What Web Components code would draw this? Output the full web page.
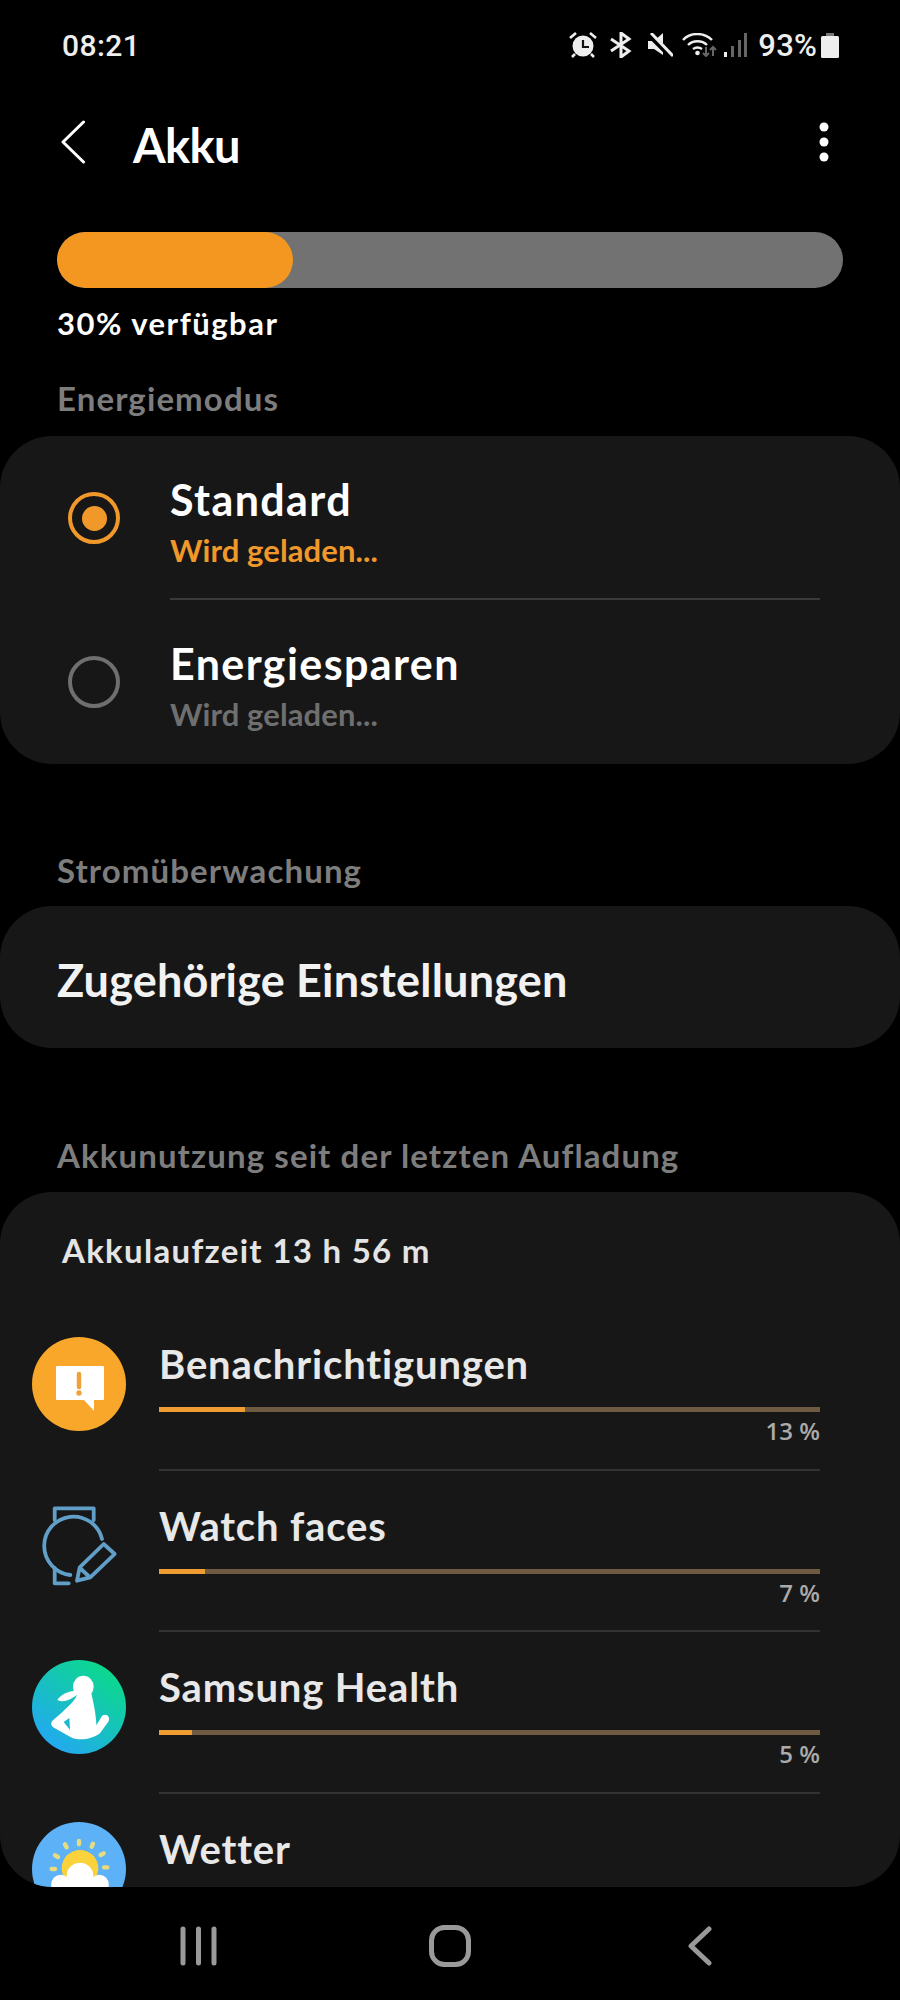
<!DOCTYPE html>
<html lang="de">
<head>
<meta charset="utf-8">
<title>Akku</title>
<style>
  html, body { margin: 0; background: #000; }
  body { width: 900px; height: 2000px; overflow: hidden; font-family: "Lato", "Noto Sans", sans-serif; color: #fff; }
  .related { height: 142px; display: flex; align-items: center; padding: 5px 0 0 57px; box-sizing: border-box; font-size: 45px; font-weight: 700; letter-spacing: .2px; color: #f2f2f2; }
</style>
</head>
<body>
<status-bar></status-bar>
<app-header heading="Akku"></app-header>
<charge-meter level="30"></charge-meter>

<section-label style="--top:37px">Energiemodus</section-label>
<group-card style="--mt:19px">
  <mode-row checked heading="Standard" sub="Wird geladen..."></mode-row>
  <mode-row heading="Energiesparen" sub="Wird geladen..."></mode-row>
</group-card>

<section-label style="--top:87px">Stromüberwachung</section-label>
<group-card style="--mt:17px">
  <div class="related">Zugehörige Einstellungen</div>
</group-card>

<section-label style="--top:88px">Akkunutzung seit der letzten Aufladung</section-label>
<group-card style="--mt:18px;--h:695px">
  <usage-head>Akkulaufzeit 13 h 56 m</usage-head>
  <usage-row name="Benachrichtigungen" pct="13" icon="notify"></usage-row>
  <usage-row name="Watch faces" pct="7" icon="watch"></usage-row>
  <usage-row name="Samsung Health" pct="5" icon="health"></usage-row>
  <usage-row name="Wetter" icon="weather"></usage-row>
</group-card>

<nav-bar></nav-bar>

<script>
class StatusBar extends HTMLElement {
    constructor() {
        super();
        this.attachShadow({ mode: 'open' });
    }

    connectedCallback() {
        this.shadowRoot.innerHTML = `
            <style>
                :host { display: flex; align-items: center; height: 90px; padding: 0 61px 0 62px; font-family: Roboto, "Liberation Sans", sans-serif; color: #eee; }
                .time { font-size: 30px; font-weight: 500; letter-spacing: .4px; margin-right: auto; }
                .pct { font-size: 31px; font-weight: 500; letter-spacing: .2px; margin-left: 11px; }
                svg { display: block; flex: none; }
            </style>
            <span class="time">08:21</span>
            <svg width="28" height="26" viewBox="0 0 28 26" fill="none">
                <circle cx="14" cy="14" r="10.500" fill="#eee"/>
                <path d="M14 8v7h6" stroke="#111" stroke-width="2.200"/>
                <path d="M1 6l6-5M27 6l-6-5M6 22l-3 3M22 22l3 3" stroke="#eee" stroke-width="2.600"/>
            </svg>
            <svg width="25" height="26" viewBox="0 0 25 26" fill="none" stroke="#eee" stroke-width="3" style="margin-left:12px">
                <path d="M2 7l18 12-8 6V1l8 6L2 19"/>
            </svg>
            <svg width="25" height="25" viewBox="0 0 25 25" style="margin-left:14px">
                <path d="M0 8h6l9-8v22l-9-6H0z" fill="#eee"/>
                <path d="M1 1l23 23" stroke="#000" stroke-width="6"/>
                <path d="M3 0l22 23" stroke="#eee" stroke-width="3"/>
            </svg>
            <svg width="35" height="24" viewBox="0 0 35 24" fill="none" style="margin-left:9px">
                <path d="M1 7c7-8 21-8 29 0M6 12c5-5 14-5 19 0M11 16c3-2 6-2 9 0" stroke="#eee" stroke-width="2.400"/>
                <circle cx="15.500" cy="20" r="2.300" fill="#eee"/>
                <path d="M24 14v9M21 20l3 3 3-3M31 23v-9M28 17l3-3 3 3" stroke="#666" stroke-width="2"/>
            </svg>
            <svg width="23" height="24" viewBox="0 0 23 24" style="margin-left:7px">
                <rect x="0" y="19" width="3" height="5" fill="#eee"/>
                <rect x="7" y="13" width="3" height="11" fill="#666"/>
                <rect x="14" y="7" width="3" height="17" fill="#666"/>
                <rect x="20" y="0" width="3" height="24" fill="#666"/>
            </svg>
            <span class="pct">93%</span>
            <svg width="18" height="25" viewBox="0 0 18 25" style="margin-left:4px">
                <path d="M5 0h8v3H5z" fill="#777"/>
                <rect y="3" width="18" height="22" rx="1.500" fill="#eee"/>
            </svg>
        `;
    }
}

class AppHeader extends HTMLElement {
    constructor() {
        super();
        this.attachShadow({ mode: 'open' });
    }

    connectedCallback() {
        this.shadowRoot.innerHTML = `
            <style>
                :host { display: flex; align-items: center; height: 104px; padding: 0 71px 0 61px; }
                h1 { margin: 6px auto 0 48px; font-size: 47px; font-weight: 700; letter-spacing: -.6px; }
                svg { flex: none; }
            </style>
            <svg width="24" height="44" viewBox="0 0 24 44" fill="none" stroke="#fff" stroke-width="3" stroke-linecap="round" stroke-linejoin="round"><path d="M22.500 2 2 22l20.500 20"/></svg>
            <h1>${this.getAttribute('heading')}</h1>
            <svg width="10" height="40" viewBox="0 0 10 40" fill="#fff"><circle cx="5" cy="5" r="4.500"/><circle cx="5" cy="20" r="4.500"/><circle cx="5" cy="35" r="4.500"/></svg>
        `;
    }
}

class ChargeMeter extends HTMLElement {
    constructor() {
        super();
        this.attachShadow({ mode: 'open' });
    }

    connectedCallback() {
        this.shadowRoot.innerHTML = `
            <style>
                :host { display: block; padding: 38px 57px 0; }
                .track { height: 56px; border-radius: 28px; background: #727272; overflow: hidden; }
                .fill { width: 236px; height: 100%; border-radius: 28px; background: #f39720; }
                p { margin: 16px 0 0; font-size: 31px; font-weight: 700; line-height: 38px; letter-spacing: 1.5px; }
            </style>
            <div class="track"><div class="fill"></div></div>
            <p>${this.getAttribute('level')}% verfügbar</p>
        `;
    }
}

class SectionLabel extends HTMLElement {
    constructor() {
        super();
        this.attachShadow({ mode: 'open' });
    }

    connectedCallback() {
        this.shadowRoot.innerHTML = `
            <style>
                :host { display: block; margin-top: var(--top, 0); padding-left: 57px; font-size: 33px; line-height: 38px; font-weight: 700; letter-spacing: 1.1px; color: #7d7d7d; }
            </style>
            <slot></slot>
        `;
    }
}

class GroupCard extends HTMLElement {
    constructor() {
        super();
        this.attachShadow({ mode: 'open' });
    }

    connectedCallback() {
        this.shadowRoot.innerHTML = `
            <style>
                :host { display: block; margin-top: var(--mt, 0); height: var(--h, auto); background: #171717; border-radius: 52px; overflow: hidden; }
            </style>
            <slot></slot>
        `;
    }
}

class ModeRow extends HTMLElement {
    constructor() {
        super();
        this.attachShadow({ mode: 'open' });
    }

    connectedCallback() {
        const checked = this.hasAttribute('checked');
        const color = checked ? '#f0982a' : '#6f6f6f';
        this.shadowRoot.innerHTML = `
            <style>
                :host { display: flex; align-items: center; height: 164px; position: relative; padding-left: 68px; }
                :host([checked])::after { content: ''; position: absolute; left: 170px; right: 80px; bottom: 0; height: 2px; background: #3a3a3a; }
                .radio { flex: none; width: 52px; height: 52px; box-sizing: border-box; border: 4px solid ${color}; border-radius: 50%; display: grid; place-items: center; }
                .dot { width: 25px; height: 25px; border-radius: 50%; background: ${checked ? color : 'transparent'}; }
                .txt { margin-left: 50px; display: flex; flex-direction: column; gap: 6px; margin-top: 8px; }
                .t { font-size: 43px; font-weight: 700; line-height: 50px; letter-spacing: 1.4px; }
                .s { font-size: 31px; font-weight: 700; line-height: 38px; letter-spacing: .1px; color: ${color}; }
            </style>
            <div class="radio"><div class="dot"></div></div>
            <div class="txt"><span class="t">${this.getAttribute('heading')}</span><span class="s">${this.getAttribute('sub')}</span></div>
        `;
    }
}

class UsageHead extends HTMLElement {
    constructor() {
        super();
        this.attachShadow({ mode: 'open' });
    }

    connectedCallback() {
        this.shadowRoot.innerHTML = `
            <style>
                :host { display: flex; align-items: center; box-sizing: border-box; height: 117px; padding: 0 0 2px 62px; font-size: 33px; font-weight: 700; letter-spacing: 1.3px; color: #e4e4e4; }
            </style>
            <slot></slot>
        `;
    }
}

const USAGE_ICONS = {
    notify: `
        <circle cx="47" cy="47" r="47" fill="#f9a72b"/>
        <path d="M24 30q0-1 1-1h46q1 0 1 1v32q0 1-1 1h-9v11L52 63H25q-1 0-1-1z" fill="#fff"/>
        <path d="M47 37v13" stroke="#f0a23a" stroke-width="4.500" stroke-linecap="round"/>
        <circle cx="47" cy="56" r="2.700" fill="#f0a23a"/>`,
    watch: `
        <g fill="none" stroke="#619fc9" stroke-width="3.800" stroke-linejoin="round" stroke-linecap="round">
            <path d="M70 40A29.300 29.300 0 1 0 38.300 76"/>
            <path d="M22.700 21V9.300h39V21M22.700 69v15.300h14"/>
            <path d="M45 81.700l2.700-13.400L71.700 45l11 10-24.400 23.300zM49 70l8 7.500"/>
        </g>`,
    health: `
        <defs><linearGradient id="hg" x1="0.2" y1="1" x2="0.85" y2="0.15"><stop offset="0" stop-color="#24a6f7"/><stop offset="1" stop-color="#0cd88e"/></linearGradient></defs>
        <circle cx="47" cy="47" r="47" fill="url(#hg)"/>
        <g transform="translate(-12 -10) scale(.3333)" fill="#fff">
            <ellipse cx="190" cy="110" rx="31" ry="33"/>
            <path d="M168 122C145 122 120 135 112 150C130 160 150 150 170 136Z"/>
            <path fill-rule="evenodd" d="M172 130C168 150 150 165 125 188L97 212C91 220 94 228 102 233L150 260C170 272 210 272 240 250L266 214C272 200 258 188 246 198L229 226C229 200 222 165 214 130ZM131 216L148 204L150 240Z"/>
        </g>`,
    weather: `
        <circle cx="47" cy="47" r="47" fill="#5db2f7"/>
        <g transform="translate(-12 -22) scale(.3333)">
            <circle cx="180" cy="205" r="55" fill="#f9d23c"/>
            <g stroke="#e8dc80" stroke-width="13" stroke-linecap="round" fill="none">
                <path d="M177 123v10M135 133l5 9M219 131l-4 9M105 166l9 5M251 160l-9 5M95 207h10M252 202h10"/>
            </g>
            <g fill="#fff"><circle cx="180" cy="228" r="40"/><circle cx="122" cy="252" r="28"/><circle cx="238" cy="252" r="28"/><rect x="95" y="250" width="170" height="60"/></g>
        </g>`
};

class UsageRow extends HTMLElement {
    constructor() {
        super();
        this.attachShadow({ mode: 'open' });
    }

    connectedCallback() {
        const pct = this.getAttribute('pct');
        // die letzte Zeile wird von der Karte abgeschnitten
        const meter = pct ? `
            <div class="track"><div class="fill"></div></div>
            <div class="pct">${pct} %</div>` : '';
        this.shadowRoot.innerHTML = `
            <style>
                :host { display: flex; box-sizing: border-box; height: 161.500px; padding: 28px 80px 0 32px; }
                svg { flex: none; display: block; }
                .body { flex: 1; margin-left: 33px; margin-top: -28px; padding-top: 28px; border-bottom: 2px solid #333; }
                .name { font-size: 40px; font-weight: 700; line-height: 48px; letter-spacing: .85px; color: #e8e8e8; margin-top: 3px; }
                .track { height: 5px; margin-top: 19px; background: #6f5a42; }
                .fill { height: 100%; width: ${pct}%; background: #ef9c33; }
                .pct { margin-top: 4px; text-align: right; font: 600 24px/30px "Open Sans", sans-serif; color: #aaa; }
            </style>
            <svg width="94" height="94" viewBox="0 0 94 94">${USAGE_ICONS[this.getAttribute('icon')]}</svg>
            <div class="body">
                <div class="name">${this.getAttribute('name')}</div>
                ${meter}
            </div>
        `;
    }
}

class NavBar extends HTMLElement {
    constructor() {
        super();
        this.attachShadow({ mode: 'open' });
    }

    connectedCallback() {
        this.shadowRoot.innerHTML = `
            <style>
                :host { display: block; height: 113px; }
                .bar { display: flex; align-items: center; padding: 38px 0 0 180px; }
                svg { display: block; flex: none; }
                .home { margin-left: 212px; }
                .back { margin-left: 217px; }
            </style>
            <div class="bar">
                <svg width="37" height="40" viewBox="0 0 37 40" fill="none" stroke="#999" stroke-width="5" stroke-linecap="round"><path d="M3 3v34M18.500 3v34M34 3v34"/></svg>
                <svg class="home" width="42" height="42" viewBox="0 0 42 42" fill="none" stroke="#999" stroke-width="5"><rect x="2.500" y="2.500" width="37" height="37" rx="13"/></svg>
                <svg class="back" width="24" height="40" viewBox="0 0 24 40" fill="none" stroke="#999" stroke-width="5" stroke-linecap="round" stroke-linejoin="round"><path d="M21 3 3 20l18 17"/></svg>
            </div>
        `;
    }
}

customElements.define('status-bar', StatusBar);
customElements.define('app-header', AppHeader);
customElements.define('charge-meter', ChargeMeter);
customElements.define('section-label', SectionLabel);
customElements.define('group-card', GroupCard);
customElements.define('mode-row', ModeRow);
customElements.define('usage-head', UsageHead);
customElements.define('usage-row', UsageRow);
customElements.define('nav-bar', NavBar);
</script>
</body>
</html>
